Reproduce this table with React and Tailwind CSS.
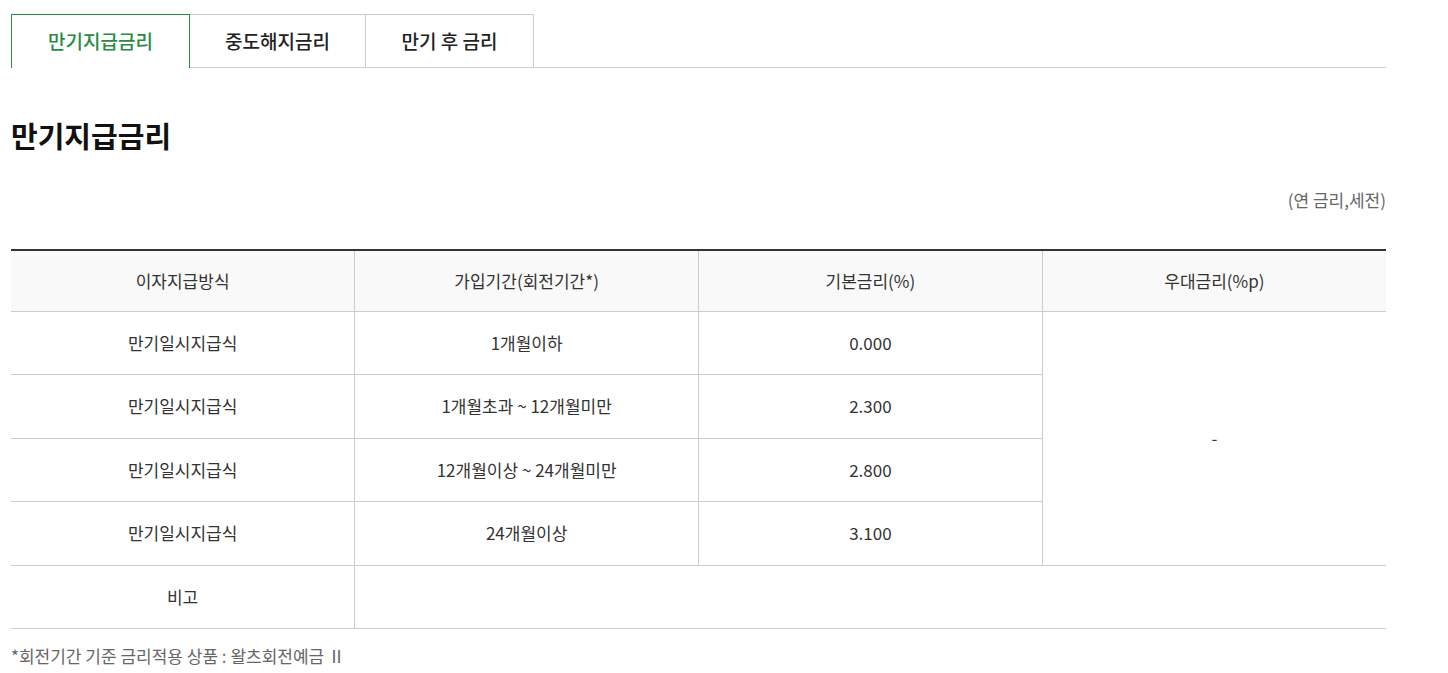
import React, { useState } from 'react';

const tabs = ['만기지급금리', '중도해지금리', '만기 후 금리'];

const rows = [
  { method: '만기일시지급식', period: '1개월이하', rate: '0.000', h: 'h-[63px]' },
  { method: '만기일시지급식', period: '1개월초과 ~ 12개월미만', rate: '2.300', h: 'h-[64px]' },
  { method: '만기일시지급식', period: '12개월이상 ~ 24개월미만', rate: '2.800', h: 'h-[63px]' },
  { method: '만기일시지급식', period: '24개월이상', rate: '3.100', h: 'h-[64px]' }
];

const font = { fontFamily: '"Noto Sans CJK KR", "Noto Sans", sans-serif' };

const App = () => {
  const [active, setActive] = useState(0);

  return (
    <div className="min-h-screen bg-white pl-[11px] pt-[14px]" style={font}>
      <div className="w-[1375px]">
        <div className="flex border-b border-[#cccccc]">
          {tabs.map((tab, i) => (
            <button
              key={tab}
              onClick={() => setActive(i)}
              className={
                i === active
                  ? 'w-[179px] h-[54px] -mb-px bg-white border border-b-0 border-[#2a8a45] text-[19px] font-medium text-[#2a8a45]'
                  : i === 1
                    ? 'w-[176px] h-[53px] border border-l-0 border-b-0 border-[#cccccc] text-[19px] font-medium text-[#222]'
                    : 'w-[168px] h-[53px] border border-l-0 border-b-0 border-[#cccccc] text-[19px] font-medium text-[#222]'
              }
            >
              {tab}
            </button>
          ))}
        </div>

        <h2 className="mt-[49px] text-[29px] font-bold text-[#111] leading-[36px]">{tabs[active]}</h2>

        <p className="mt-[37px] text-right text-[17px] text-[#666] leading-[20px]">(연 금리,세전)</p>

        <table className="mt-[39px] w-full border-collapse table-fixed text-[17px] text-[#333] border-t-2 border-[#333333]">
          <thead>
            <tr className="bg-[#f9f9f9]">
              <th className="h-[61px] font-normal border-b border-r border-[#cccccc]">이자지급방식</th>
              <th className="h-[61px] font-normal border-b border-r border-[#cccccc]">가입기간(회전기간*)</th>
              <th className="h-[61px] font-normal border-b border-r border-[#cccccc]">기본금리(%)</th>
              <th className="h-[61px] font-normal border-b border-[#cccccc]">우대금리(%p)</th>
            </tr>
          </thead>
          <tbody>
            {rows.map((row, i) => (
              <tr key={i}>
                <td className={`${row.h} text-center border-b border-r border-[#cccccc]`}>{row.method}</td>
                <td className={`${row.h} text-center border-b border-r border-[#cccccc]`}>{row.period}</td>
                <td className={`${row.h} text-center border-b border-r border-[#cccccc]`}>{row.rate}</td>
                {i === 0 && (
                  <td rowSpan={4} className="text-center border-b border-[#cccccc]">-</td>
                )}
              </tr>
            ))}
            <tr>
              <td className="h-[63px] text-center border-b border-r border-[#cccccc]">비고</td>
              <td colSpan={3} className="h-[63px] border-b border-[#cccccc]"></td>
            </tr>
          </tbody>
        </table>

        <p className="mt-[17px] text-[17px] text-[#666] leading-[20px]">*회전기간 기준 금리적용 상품 : 왈츠회전예금 Ⅱ</p>
      </div>
    </div>
  );
};

export default App;
